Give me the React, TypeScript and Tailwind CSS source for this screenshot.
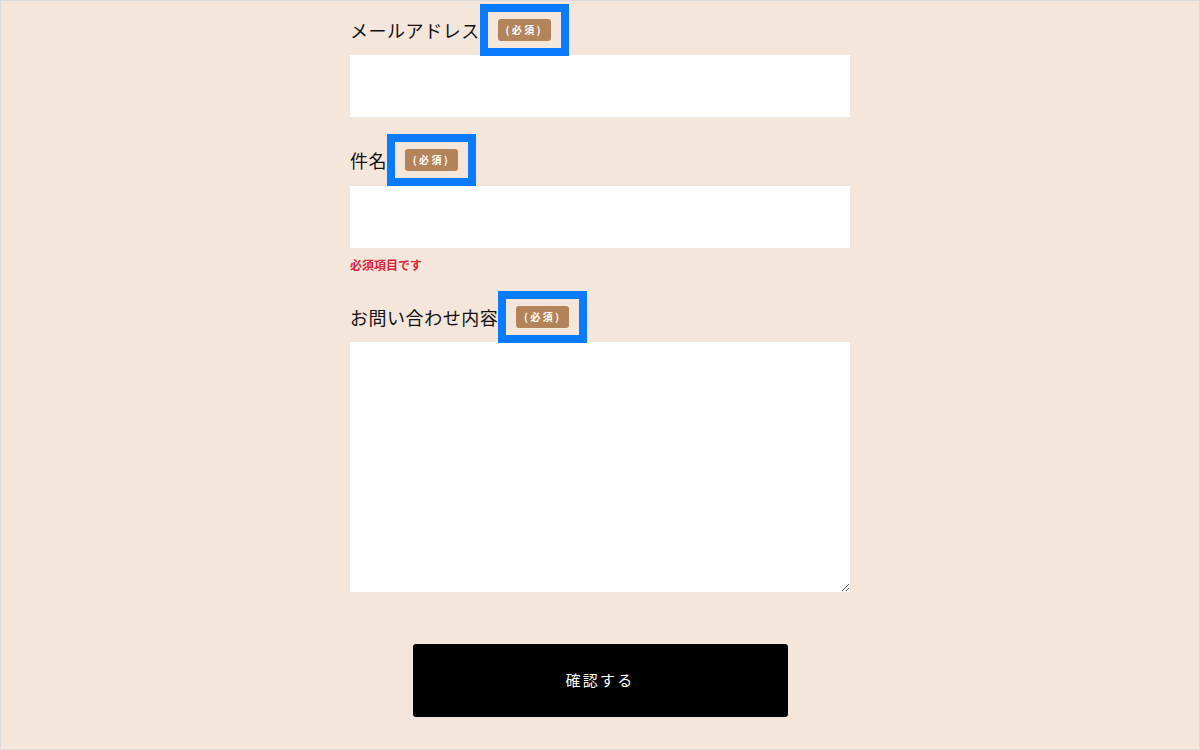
const FONT = "font-['Noto_Sans_CJK_JP','Noto_Sans',sans-serif]";

const Required = () => (
  <span className="inline-flex items-center border-[8px] border-[#0a7bff] px-[10px] py-[7px]">
    <span className="flex h-[22px] w-[53px] items-center justify-center rounded-[3px] bg-[#b3835a] text-[10px] font-bold leading-none tracking-[0.25em] text-white">
      (必須)
    </span>
  </span>
);

const Label = ({ text, h }: { text: string; h: string }) => (
  <div className={`flex items-center ${h}`}>
    <span className="text-[18px] leading-none tracking-[0.03em] text-[#111]">{text}</span>
    <Required />
  </div>
);

export default function App() {
  return (
    <div className={`${FONT} h-[750px] w-full overflow-hidden border border-[#dadada] bg-[#f5e6dc]`}>
      <form className="mx-auto w-[500px] pt-[3px]">
        <Label text="メールアドレス" h="h-[51px]" />
        <input type="email" className="block h-[62px] w-full bg-white px-4 text-[16px] outline-none" />

        <div className="mt-[17px]">
          <Label text="件名" h="h-[52px]" />
          <input type="text" className="block h-[62px] w-full bg-white px-4 text-[16px] outline-none" />
          <p className="mt-[9px] text-[12px] font-bold leading-[16px] text-[#dd2339]">必須項目です</p>
        </div>

        <div className="mt-[18px]">
          <Label text="お問い合わせ内容" h="h-[51px]" />
          <textarea className="block h-[250px] w-full bg-white px-4 py-3 text-[16px] outline-none" />
        </div>

        <div className="mt-[52px] flex justify-center">
          <button
            type="button"
            className="h-[73px] w-[375px] rounded-[3px] bg-black text-[15px] tracking-[0.15em] text-white"
          >
            確認する
          </button>
        </div>
      </form>
    </div>
  );
}
